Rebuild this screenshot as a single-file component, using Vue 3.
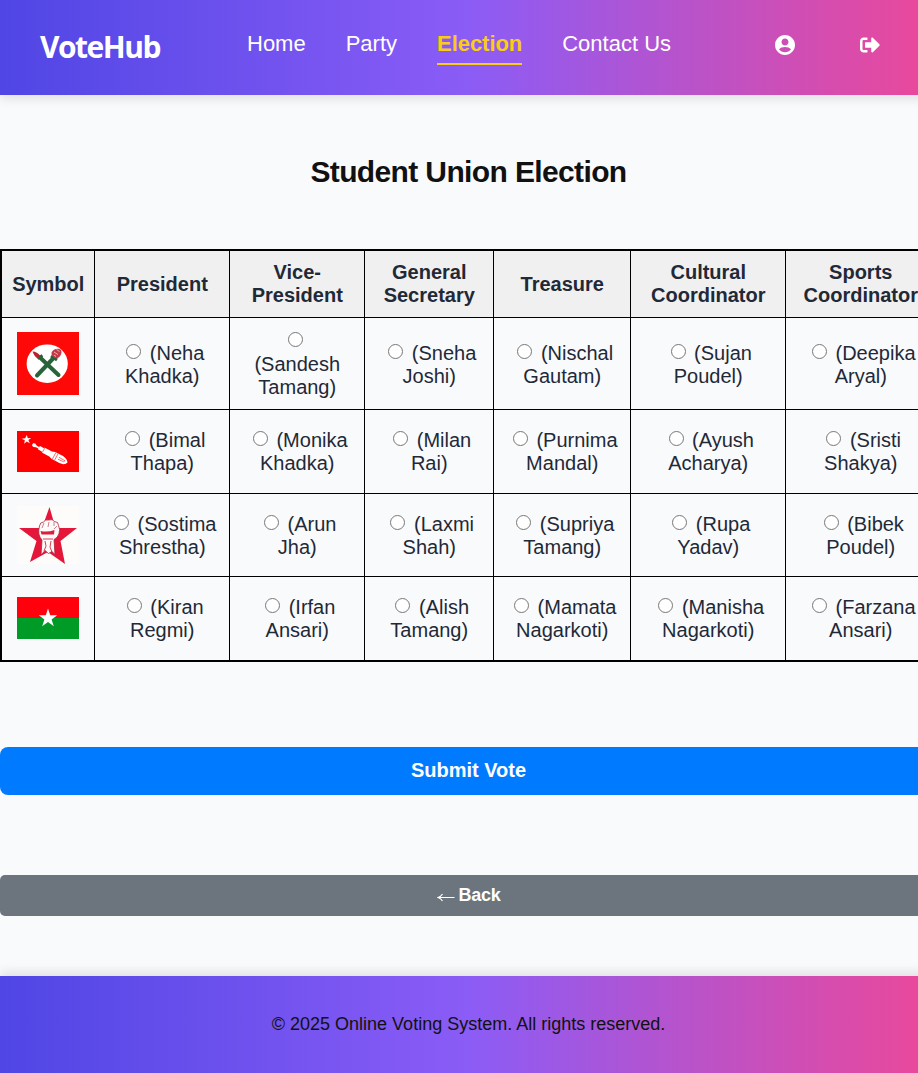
<script setup>
import { ref } from 'vue'

const links = ['Home', 'Party', 'Election', 'Contact Us']
const active = 'Election'

const posts = [
  'President',
  'Vice-\nPresident',
  'General\nSecretary',
  'Treasure',
  'Cultural\nCoordinator',
  'Sports\nCoordinator'
]

const parties = [
  { id: 'tree', names: ['(Neha\nKhadka)', '\n(Sandesh\nTamang)', '(Sneha\nJoshi)', '(Nischal\nGautam)', '(Sujan\nPoudel)', '(Deepika\nAryal)'] },
  { id: 'pen', names: ['(Bimal\nThapa)', '(Monika\nKhadka)', '(Milan\nRai)', '(Purnima\nMandal)', '(Ayush\nAcharya)', '(Sristi\nShakya)'] },
  { id: 'fist', names: ['(Sostima\nShrestha)', '(Arun\nJha)', '(Laxmi\nShah)', '(Supriya\nTamang)', '(Rupa\nYadav)', '(Bibek\nPoudel)'] },
  { id: 'flag', names: ['(Kiran\nRegmi)', '(Irfan\nAnsari)', '(Alish\nTamang)', '(Mamata\nNagarkoti)', '(Manisha\nNagarkoti)', '(Farzana\nAnsari)'] }
]

const votes = ref({})
</script>

<template>
  <div class="viewport">
    <div class="page">
      <header class="header">
        <div class="logo">VoteHub</div>
        <nav class="nav">
          <a v-for="l in links" :key="l" :class="{ active: l === active }">{{ l }}</a>
        </nav>
        <div class="actions">
          <svg class="account" viewBox="2 2 20 20"><path d="M12 2C6.480 2 2 6.480 2 12s4.480 10 10 10 10-4.480 10-10S17.520 2 12 2zm0 3.500c1.930 0 3.500 1.570 3.500 3.500s-1.570 3.500-3.500 3.500-3.500-1.570-3.500-3.500 1.570-3.500 3.500-3.500zm0 13.700c-2.400 0-4.600-.9-6-2.600.6-1.700 4-2.500 6-2.500s5.400.8 6 2.500c-1.400 1.700-3.600 2.600-6 2.600z" /></svg>
          <svg class="signout" viewBox="0 0 512 512"><path d="M497 273L329 441c-15 15-41 4.500-41-17v-96H152c-13.300 0-24-10.700-24-24v-96c0-13.300 10.700-24 24-24h136V88c0-21.400 25.900-32 41-17l168 168c9.300 9.400 9.300 24.600 0 34zM192 436v-40c0-6.600-5.400-12-12-12H96c-17.700 0-32-14.300-32-32V160c0-17.700 14.300-32 32-32h84c6.600 0 12-5.400 12-12V76c0-6.600-5.400-12-12-12H96c-53 0-96 43-96 96v192c0 53 43 96 96 96h84c6.600 0 12-5.400 12-12z" /></svg>
        </div>
      </header>

      <main>
        <h1>Student Union Election</h1>
        <table>
          <colgroup>
            <col class="c-symbol" /><col class="c-pres" /><col class="c-pres" /><col class="c-sec" />
            <col class="c-treas" /><col class="c-cult" /><col class="c-sport" />
          </colgroup>
          <thead>
            <tr>
              <th>Symbol</th>
              <th v-for="p in posts" :key="p">{{ p }}</th>
            </tr>
          </thead>
          <tbody>
            <tr v-for="party in parties" :key="party.id" :class="'row-' + party.id">
              <td>
                <svg v-if="party.id === 'tree'" class="symbol" width="62" height="63" viewBox="0 0 62 63">
                  <rect width="62" height="63" fill="#ff0808" />
                  <ellipse cx="30.200" cy="31.700" rx="20.600" ry="19.300" fill="#fff" />
                  <path d="M20 43.500L38 24.500M41.500 43L22.500 25" stroke="#28643a" stroke-width="4" fill="none" stroke-linecap="round" />
                  <path d="M20.500 26.500l5-3M34 24l6 4" stroke="#28643a" stroke-width="3" />
                  <path d="M15.500 19.500c3 .2 6 1.500 7.500 4.500l-2 2.500c-2.500-1-4-3.500-5.500-7z" fill="#b8202d" />
                  <path d="M34.500 20.500c1.500-3.500 6.500-5 9.500-2.500 1.500 3-.5 7-4 8.500-3-1-6-2.500-5.500-6z" fill="#c23a48" />
                  <path d="M37 20l4 2.500M39.500 17.500l3 2M37 23l2 1.500" stroke="#f0b0b6" stroke-width="1" />
                </svg>
                <svg v-else-if="party.id === 'pen'" class="symbol" width="62" height="41" viewBox="0 0 62 41">
                  <rect width="62" height="41" fill="#ff0000" />
                  <path d="M9.800 4l1 3.300 3.400-.3-2.800 2 1.400 3.300-3-1.900-2.600 2.300.6-3.500-3.100-1.500 3.500-.4z" fill="#fff" />
                  <g transform="translate(15.500 13.300) rotate(28)">
                    <path d="M0-1.200l2-.9 2.500 1.300H7l.5-1.200h4l1-.8h8l3-1.100h9q6 1 7 3.900-1.500 3.700-7 3.900h-9l-3-1.100h-8l-1-.8h-4L7 1H4.500L2 2.100 0 1.200z" fill="#fff" />
                    <path d="M12.500-2.500v5M24.500-3.800v7.600M27-3.800v7.600M29.500-1l7 .3-1 1.500-6 .4" stroke="#f55" stroke-width=".8" fill="none" />
                  </g>
                </svg>
                <svg v-else-if="party.id === 'fist'" class="symbol" width="62" height="58" viewBox="0 0 62 58">
                  <rect width="62" height="58" fill="#fefcfa" />
                  <path d="M32.500 1l6 21h21.500L43.500 35 48 58 31 46 13 56l6.500-21L2 22h23z" fill="#e4163a" />
                  <path d="M24 49l1-15q-5-5-2.500-14 .5-4 4-4 2-3 5-2 4-1.500 6 1.500 4 0 4 4 2 4 .5 8-1 4-5 6l1 15-3-3-3.500 2-3.500-3z" fill="#fffafa" stroke="#a92339" stroke-width=".8" />
                  <path d="M26 33h10M28 35l1 5-2 5M34 35l-1 6 2 5" stroke="#d62641" stroke-width=".9" fill="none" />
                  <path d="M23.500 25q7 1.500 14-1l-.5 4.500H24.500z" fill="#dc1f3c" />
                  <path d="M27 17l-2 5M32 16l-1 5M37 16v4M40 20l-3 3" stroke="#9b3140" stroke-width=".6" />
                </svg>
                <svg v-else class="symbol flag" width="62" height="42" viewBox="0 0 62 42">
                  <rect width="62" height="21" fill="#ff000c" />
                  <rect y="21" width="62" height="21" fill="#009a26" />
                  <path d="M31 11.500l2.200 6.800h7l-5.600 4.100 2.200 6.900-5.800-4.200-5.800 4.200 2.200-6.900-5.600-4.100h7z" fill="#fff" />
                </svg>
              </td>
              <td v-for="(name, i) in party.names" :key="i">
                <label><input v-model="votes[i]" type="radio" :name="'post-' + i" :value="party.id" />&nbsp;{{ name }}</label>
              </td>
            </tr>
          </tbody>
        </table>
        <button class="submit">Submit Vote</button>
        <button class="back"><svg class="arrow" viewBox="0 0 18 12"><path d="M17.500 6.500H1M5.500 3Q4 5.500 1 6.500q3 1 4.500 3.500" /></svg>Back</button>
      </main>

      <footer>© 2025 Online Voting System. All rights reserved.</footer>
    </div>
  </div>
</template>

<style>
body {
  background: #f9fafc;
}
</style>

<style scoped>
.viewport {
  width: 100%;
  height: 1073px;
  overflow: hidden;
  font-family: "Liberation Sans", Arial, sans-serif;
}
.page {
  width: 937px;
  background: #f9fafc;
}
.header {
  box-sizing: border-box;
  display: flex;
  height: 95px;
  padding: 0 0 0 40px;
  background: linear-gradient(90deg, #4f46e5, #8b5cf6, #ec4899);
  box-shadow: 0 4px 10px rgba(0, 0, 0, 0.1);
}
.logo {
  width: 207px;
  padding-top: 26px;
  color: #fff;
  font: 700 30px/42px "Open Sans", sans-serif;
  letter-spacing: -1.5px;
}
.nav {
  display: flex;
  gap: 40px;
  width: 528px;
  padding-top: 31px;
  align-items: flex-start;
}
.nav a {
  height: 32px;
  color: #fff;
  font-size: 22px;
  line-height: 26px;
  white-space: nowrap;
  border-bottom: 2px solid transparent;
}
.nav .active {
  color: #facc15;
  font-weight: 700;
  letter-spacing: -0.05px;
  border-color: #facc15;
}
.actions {
  display: flex;
  gap: 65px;
  padding-top: 35px;
}
.actions svg {
  width: 20px;
  height: 20px;
  fill: #fff;
}
h1 {
  margin: 0;
  padding: 59px 0 60px;
  text-align: center;
  color: #111;
  font-size: 30px;
  line-height: 35px;
  letter-spacing: -0.63px;
}
table {
  width: 937px;
  table-layout: fixed;
  border: 2px solid #000;
  border-collapse: separate;
  border-spacing: 0;
  color: #1f2937;
  font-size: 20px;
  line-height: 23px;
}
.c-symbol { width: 93px; }
.c-pres { width: 135px; }
.c-sec { width: 129px; }
.c-treas { width: 137px; }
.c-cult { width: 155px; }
.c-sport { width: 149px; }
th,
td {
  box-sizing: border-box;
  padding: 0 0 0 0.5px;
  text-align: center;
  vertical-align: middle;
  white-space: pre-line;
  border-right: 1px solid #000;
  border-bottom: 1px solid #000;
}
th {
  height: 67px;
  background: #f0f0f0;
}
.row-tree td { height: 92px; }
.row-pen td { height: 84px; }
.row-fist td { height: 83px; }
.row-flag td { height: 83px; }
.row-tree td + td,
.row-fist td + td {
  padding-top: 2px;
}
th:last-child,
td:last-child {
  border-right: 0;
}
tr:last-child td {
  border-bottom: 0;
}
thead tr th {
  border-bottom: 1px solid #000;
}
.symbol {
  display: block;
  margin: 0 auto 0 14.5px;
}
.flag {
  margin-bottom: 1px;
}
input {
  width: 15px;
  height: 15px;
  margin: 1px 3px 2px 6px;
  vertical-align: 1px;
}
button {
  display: flex;
  align-items: center;
  justify-content: center;
  width: 937px;
  padding: 0;
  border: 0;
  color: #fff;
  font-family: inherit;
  font-weight: 700;
}
.submit {
  height: 48px;
  margin-top: 85px;
  padding-bottom: 2px;
  border-radius: 8px;
  background: #007bff;
  font-size: 20px;
}
.back {
  height: 41px;
  margin: 80px 0 60px;
  padding-bottom: 1px;
  border-radius: 5px;
  background: #6c757d;
  font-size: 18px;
  letter-spacing: -0.3px;
}
.arrow {
  width: 18px;
  height: 12px;
  margin: 3px 4px 0 0;
  fill: none;
  stroke: #fff;
  stroke-width: 1.2;
}
footer {
  height: 97px;
  background: linear-gradient(90deg, #4f46e5, #8b5cf6, #ec4899);
  box-shadow: 0 -4px 10px rgba(0, 0, 0, 0.1);
  color: #111;
  font-size: 18px;
  line-height: 96px;
  text-align: center;
}
</style>
